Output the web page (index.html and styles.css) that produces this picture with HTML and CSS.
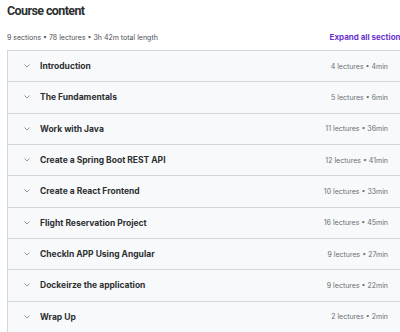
FILE: index.html
```html
<!DOCTYPE html>
<html>
<head>
<meta charset="utf-8">
<link rel="stylesheet" href="styles.css">
</head>
<body>
<div class="page">
  <h2 class="title">Course content</h2>
  <div class="meta">
    <span class="stats">9 sections • 78 lectures • 3h 42m total length</span>
    <span class="expand">Expand all sections</span>
  </div>
  <div class="box">
    <div class="row"><span class="chev"><svg viewBox="0 0 6 4" width="6" height="4"><polyline points="0.5,0.5 3,3 5.5,0.5"/></svg></span><span class="name">Introduction</span><span class="info">4 lectures • 4min</span></div>
    <div class="row"><span class="chev"><svg viewBox="0 0 6 4" width="6" height="4"><polyline points="0.5,0.5 3,3 5.5,0.5"/></svg></span><span class="name">The Fundamentals</span><span class="info">5 lectures • 6min</span></div>
    <div class="row"><span class="chev"><svg viewBox="0 0 6 4" width="6" height="4"><polyline points="0.5,0.5 3,3 5.5,0.5"/></svg></span><span class="name">Work with Java</span><span class="info">11 lectures • 36min</span></div>
    <div class="row"><span class="chev"><svg viewBox="0 0 6 4" width="6" height="4"><polyline points="0.5,0.5 3,3 5.5,0.5"/></svg></span><span class="name">Create a Spring Boot REST API</span><span class="info">12 lectures • 41min</span></div>
    <div class="row"><span class="chev"><svg viewBox="0 0 6 4" width="6" height="4"><polyline points="0.5,0.5 3,3 5.5,0.5"/></svg></span><span class="name">Create a React Frontend</span><span class="info">10 lectures • 33min</span></div>
    <div class="row"><span class="chev"><svg viewBox="0 0 6 4" width="6" height="4"><polyline points="0.5,0.5 3,3 5.5,0.5"/></svg></span><span class="name">Flight Reservation Project</span><span class="info">16 lectures • 45min</span></div>
    <div class="row"><span class="chev"><svg viewBox="0 0 6 4" width="6" height="4"><polyline points="0.5,0.5 3,3 5.5,0.5"/></svg></span><span class="name">CheckIn APP Using Angular</span><span class="info">9 lectures • 27min</span></div>
    <div class="row"><span class="chev"><svg viewBox="0 0 6 4" width="6" height="4"><polyline points="0.5,0.5 3,3 5.5,0.5"/></svg></span><span class="name">Dockeirze the application</span><span class="info">9 lectures • 22min</span></div>
    <div class="row"><span class="chev"><svg viewBox="0 0 6 4" width="6" height="4"><polyline points="0.5,0.5 3,3 5.5,0.5"/></svg></span><span class="name">Wrap Up</span><span class="info">2 lectures • 2min</span></div>
  </div>
</div>
</body>
</html>
```
FILE: styles.css
```css
html, body {
  margin: 0;
  padding: 0;
  overflow: hidden;
  background: #ffffff;
}
body {
  font-family: Inter, "Noto Sans", sans-serif;
  color: #2d2f31;
}
.page {
  margin-left: 7px;
  width: 398px;
}
.title {
  margin: 0;
  padding-top: 1px;
  font-family: Roboto, "Liberation Sans", sans-serif;
  font-size: 12.5px;
  line-height: 20px;
  font-weight: 700;
  letter-spacing: -0.6px;
}
.meta {
  display: flex;
  justify-content: space-between;
  align-items: baseline;
  margin-top: 11px;
  margin-bottom: 7px;
  line-height: 10px;
  white-space: nowrap;
}
.stats {
  font-size: 7px;
  color: #4b4f52;
}
.expand {
  font-size: 8px;
  font-weight: 700;
  color: #6a34d2;
}
.box {
  border: 1px solid #d1d7dc;
  border-bottom: none;
}
.row {
  display: flex;
  align-items: center;
  height: 30.33px;
  border-bottom: 1px solid #d1d7dc;
  background: #f7f9fa;
  padding: 0 16px 0 16px;
  white-space: nowrap;
}
.chev {
  display: flex;
  width: 16px;
}
.chev svg {
  fill: none;
  stroke: #8a8f93;
  stroke-width: 0.9;
}
.name {
  flex: 1;
  font-size: 8.5px;
  font-weight: 700;
  color: #2d2f31;
}
.info {
  font-size: 7px;
  color: #6a6f73;
}
```
